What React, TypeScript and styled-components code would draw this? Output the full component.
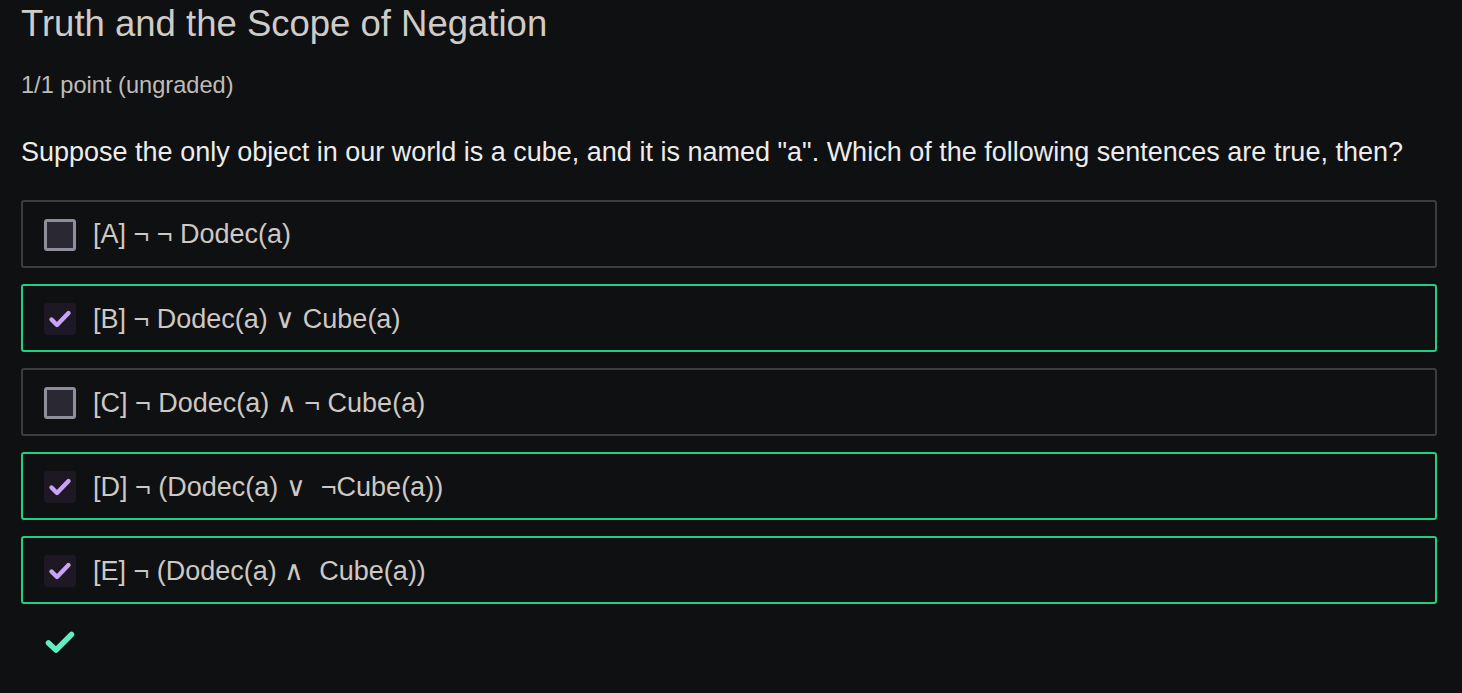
import React from 'react';
import styled, { createGlobalStyle } from 'styled-components';

const GlobalStyle = createGlobalStyle`
  html, body {
    margin: 0;
    padding: 0;
    background: #0f1012;
  }
  body {
    font-family: "Liberation Sans", Arial, sans-serif;
  }
`;

const Page = styled.div`
  display: flex;
  flex-direction: column;
  padding: 2px 25px 40px 21px;
  min-height: 693px;
  box-sizing: border-box;
  background: #0f1012;
`;

const Title = styled.h2`
  margin: 0;
  font-size: 36.5px;
  line-height: 44px;
  font-weight: 400;
  color: #cfccc8;
`;

const Points = styled.div`
  margin-top: 25px;
  font-size: 23.6px;
  line-height: 28px;
  color: #bfbcb8;
`;

const Question = styled.p`
  margin: 37px 0 32px;
  font-size: 27px;
  line-height: 32px;
  color: #ececea;
`;

const Options = styled.div`
  display: flex;
  flex-direction: column;
  gap: 16px;
`;

const Option = styled.label<{ $checked: boolean }>`
  display: flex;
  align-items: center;
  gap: 17px;
  height: 68px;
  box-sizing: border-box;
  padding: 1px 0 0 21px;
  border: 2px solid ${p => (p.$checked ? '#22d084' : '#3a3c3f')};
  border-radius: 3px;
  font-size: 27px;
  color: #cdc8c3;
  white-space: pre;
`;

const Box = styled.span<{ $checked: boolean }>`
  display: flex;
  align-items: center;
  justify-content: center;
  width: 32px;
  height: 32px;
  box-sizing: border-box;
  border-radius: 3px;
  background: ${p => (p.$checked ? '#1d1824' : '#2a2833')};
  border: ${p => (p.$checked ? 'none' : '3px solid #8f8e99')};
`;

const Result = styled.div`
  margin: 26px 0 0 24px;
  height: 24px;
`;

const options = [
  { text: '[A] ¬ ¬ Dodec(a)', checked: false },
  { text: '[B] ¬ Dodec(a) ∨ Cube(a)', checked: true },
  { text: '[C] ¬ Dodec(a) ∧ ¬ Cube(a)', checked: false },
  { text: '[D] ¬ (Dodec(a) ∨  ¬Cube(a))', checked: true },
  { text: '[E] ¬ (Dodec(a) ∧  Cube(a))', checked: true },
];

const Check: React.FC = () => (
  <svg width="28" height="28" viewBox="0 0 28 28">
    <path d="M5.5 14.5 L11 20 L22.5 8" fill="none" stroke="#c9a3f7" strokeWidth="4.4" strokeLinecap="round" strokeLinejoin="round" />
  </svg>
);

const App: React.FC = () => (
  <>
    <GlobalStyle />
    <Page>
      <Title>Truth and the Scope of Negation</Title>
      <Points>1/1 point (ungraded)</Points>
      <Question>Suppose the only object in our world is a cube, and it is named "a". Which of the following sentences are true, then?</Question>
      <Options>
        {options.map(o => (
          <Option key={o.text} $checked={o.checked}>
            <Box $checked={o.checked}>{o.checked && <Check />}</Box>
            <span>{o.text}</span>
          </Option>
        ))}
      </Options>
      <Result>
        <svg width="30" height="24" viewBox="0 0 30 24">
          <path d="M3.5 13 L11 20 L26.5 4.5" fill="none" stroke="#62eebf" strokeWidth="5.5" strokeLinecap="round" strokeLinejoin="round" />
        </svg>
      </Result>
    </Page>
  </>
);

export default App;
